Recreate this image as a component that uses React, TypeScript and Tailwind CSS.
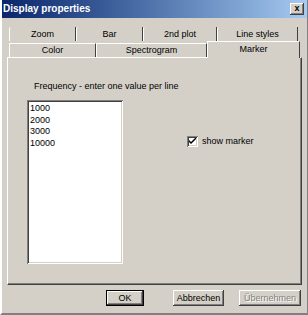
import React from 'react';

const font = { fontFamily: '"Liberation Sans", Arial, sans-serif' };

const raised =
  'shadow-[inset_-1px_-1px_#404040,inset_1px_1px_#ffffff,inset_-2px_-2px_#808080,inset_2px_2px_#d4d0c8]';
const sunken =
  'shadow-[inset_1px_1px_#808080,inset_-1px_-1px_#ffffff,inset_2px_2px_#404040,inset_-2px_-2px_#d4d0c8]';

const backTabs = [
  { label: 'Zoom', w: 'w-[67px]' },
  { label: 'Bar', w: 'w-[67px]' },
  { label: '2nd plot', w: 'w-[74px]' },
  { label: 'Line styles', w: 'w-[81px]' },
];

const values = ['1000', '2000', '3000', '10000'];

const App: React.FC = () => {
  return (
    <div
      className="w-[308px] h-[315px] bg-[#d4d0c8] flex flex-col border-l-2 border-l-white border-r border-r-[#808080] border-b-2 border-b-[#808080] text-black text-[9px] overflow-hidden"
      style={font}
    >
      {/* Title bar */}
      <div className="h-[18px] -ml-[2px] flex items-center justify-between pl-[3px] pr-[3px] bg-gradient-to-r from-[#0a246a] to-[#a6caf0]">
        <span className="text-white font-bold text-[10px] leading-none">Display properties</span>
        <div className={`w-[14px] h-[12px] bg-[#d4d0c8] flex items-center justify-center text-[9px] font-bold leading-none pb-[1px] ${raised}`}>
          x
        </div>
      </div>

      {/* Tabs */}
      <div className="pl-[5px] pt-[9px]">
        <div className="flex pl-[2px] h-[14px]">
          {backTabs.map((t) => (
            <div
              key={t.label}
              className={`${t.w} h-full border-l border-l-white border-r border-r-[#404040] rounded-tl-[2px] flex items-center justify-center leading-none`}
            >
              {t.label}
            </div>
          ))}
        </div>
        <div className="flex items-end pl-[2px] h-[16px]">
          <div className="w-[87px] h-[14px] border-t border-t-white border-l border-l-white border-r border-r-[#404040] flex items-center justify-center leading-none">
            Color
          </div>
          <div className="w-[111px] h-[14px] border-t border-t-white border-l border-l-white border-r border-r-[#404040] flex items-center justify-center leading-none">
            Spectrogram
          </div>
          <div className="relative z-10 -mb-px w-[93px] h-[17px] bg-[#d4d0c8] border-t border-t-white border-l border-l-white border-r border-r-[#404040] flex items-start justify-center pt-[3px] leading-none">
            Marker
          </div>
        </div>

        {/* Panel */}
        <div className="w-[295px] h-[228px] border-t border-t-white border-l border-l-white border-r border-r-[#404040] border-b border-b-[#404040] shadow-[inset_-1px_-1px_#808080] pl-[19px] pt-[24px] flex flex-col">
          <div className="pl-[7px] leading-none h-[11px]">Frequency - enter one value per line</div>
          <div className="flex mt-[7px]">
            <div className={`w-[96px] h-[164px] bg-white ${sunken} pl-[3px] pt-[3px] flex flex-col`}>
              {values.map((v) => (
                <div key={v} className="h-[11.5px] leading-[11.5px]">
                  {v}
                </div>
              ))}
            </div>
            <div className="ml-[64px] pt-[36px]">
              <label className="flex items-center gap-[4px]">
                <span className={`w-[11px] h-[11px] bg-white ${sunken} flex items-center justify-center`}>
                  <svg width="7" height="7" viewBox="0 0 7 7">
                    <path d="M0 2 L0 4 L2 6 L7 1 L7 -1 L2 4 Z" fill="#000" />
                  </svg>
                </span>
                <span className="leading-none">show marker</span>
              </label>
            </div>
          </div>
        </div>
      </div>

      {/* Buttons */}
      <div className="flex pl-[104px] pt-[5px]">
        <button className={`w-[38px] h-[16px] border border-black bg-[#d4d0c8] ${raised} leading-none`}>OK</button>
        <button className={`ml-[29px] w-[51px] h-[16px] bg-[#d4d0c8] ${raised} leading-none`}>Abbrechen</button>
        <button className={`ml-[15px] w-[62px] h-[16px] bg-[#d4d0c8] ${raised} leading-none text-[#808080] [text-shadow:1px_1px_#ffffff]`}>
          Übernehmen
        </button>
      </div>
    </div>
  );
};

export default App;
